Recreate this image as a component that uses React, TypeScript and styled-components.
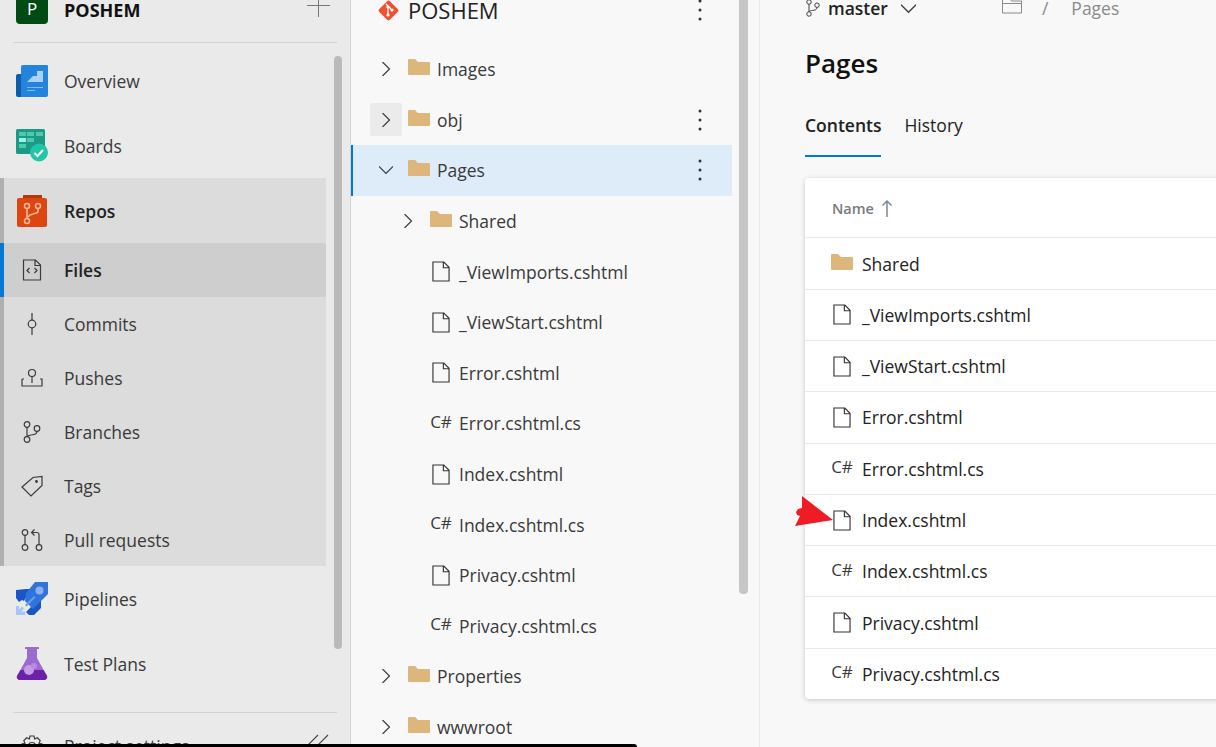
import React from "react";
import styled, { createGlobalStyle } from "styled-components";

const GlobalStyle = createGlobalStyle`
  html, body {
    margin: 0;
    padding: 0;
    height: 100%;
    overflow: hidden;
    background: #f8f8f8;
  }
  * {
    box-sizing: border-box;
  }
  body {
    font-family: "Open Sans", "Noto Sans", sans-serif;
    color: #2b2b2b;
  }
`;

const Page = styled.div`
  display: flex;
  position: relative;
  width: 1216px;
  height: 747px;
  overflow: hidden;
`;

const Sidebar = styled.aside`
  flex: 0 0 350px;
  height: 747px;
  background: #eaeaea;
  overflow: hidden;
`;

const ProjectHeader = styled.div`
  display: flex;
  align-items: center;
  height: 32px;
  margin-top: -8px;
  padding-left: 16px;
  margin-bottom: 18px;
`;

const ProjectAvatar = styled.div`
  display: flex;
  align-items: center;
  justify-content: center;
  width: 32px;
  height: 32px;
  border-radius: 4px;
  background: #004b14;
  color: #fff;
  font-size: 17px;
`;

const ProjectName = styled.div`
  margin: 4px 0 0 16px;
  font-size: 18px;
  font-weight: 700;
  color: #111;
`;

const AddButton = styled.div`
  margin-left: auto;
  margin-right: 20px;
  width: 23px;
  height: 23px;
  color: #777;
`;

const Divider = styled.div`
  height: 1px;
  margin: 0 13px;
  background: #d2d2d2;
`;

const SideBody = styled.div`
  display: flex;
  height: 669px;
`;

const Nav = styled.nav`
  flex: 0 0 326px;
  padding-top: 5px;
`;

const SideThumb = styled.div`
  flex: 0 0 8px;
  height: 593px;
  margin: 13px 0 0 8px;
  border-radius: 4px;
  background: #bababa;
`;

const NavGroup = styled.div`
  border-left: 4px solid #b0b0b0;
  background: #dcdcdc;
  height: 388px;
`;

const NavRow = styled.div<{ $tall?: boolean; $active?: boolean; $strong?: boolean; $inset?: boolean }>`
  display: flex;
  align-items: center;
  height: ${({ $tall }) => ($tall ? "65px" : "54px")};
  padding-left: ${({ $inset }) => ($inset ? "12px" : "16px")};
  font-size: 17.5px;
  font-weight: ${({ $strong }) => ($strong ? 600 : 400)};
  color: ${({ $strong }) => ($strong ? "#222" : "#3a3a3a")};
  background: ${({ $active }) => ($active ? "#cecece" : "transparent")};
  border-radius: ${({ $active }) => ($active ? "0 2px 2px 0" : "0")};
  box-shadow: ${({ $active }) => ($active ? "-4px 0 0 #0078d4" : "none")};
`;

const NavIcon = styled.div`
  display: flex;
  align-items: center;
  justify-content: center;
  flex: 0 0 32px;
  height: 33px;
  margin-right: 16px;
`;

const SettingsRow = styled.div`
  display: flex;
  align-items: center;
  height: 54px;
  margin-top: 6px;
  padding-left: 16px;
  font-size: 17.5px;
  color: #3a3a3a;
`;

const CollapseIcon = styled.div`
  margin-left: auto;
  margin-right: 21px;
  width: 24px;
  height: 24px;
`;

const TreePanel = styled.section`
  display: flex;
  flex: 0 0 410px;
  height: 747px;
  border-left: 1px solid #d4d4d4;
  border-right: 1px solid #e8e8e8;
  background: #f8f8f8;
`;

const TreeColumn = styled.div`
  flex: 0 0 381px;
`;

const TreeThumb = styled.div`
  flex: 0 0 9px;
  height: 594px;
  margin-left: 7px;
  border-radius: 0 0 4px 4px;
  background: #c6c6c6;
`;

const RepoHeader = styled.div`
  display: flex;
  align-items: center;
  height: 24px;
  margin-top: -2px;
  margin-bottom: 22px;
  padding-left: 26px;
  font-size: 22px;
  color: #222;
`;

const RepoName = styled.span`
  margin-left: 8px;
`;

const TreeRow = styled.div<{ $level: number; $selected?: boolean }>`
  display: flex;
  align-items: center;
  height: 50.6px;
  padding-left: ${({ $level }) => ($level === 2 ? 41 : 19)}px;
  font-size: 17.5px;
  color: #3a3a3a;
  background: ${({ $selected }) => ($selected ? "#deebf9" : "transparent")};
  box-shadow: ${({ $selected }) => ($selected ? "inset 2px 0 0 #0078d4" : "none")};
`;

const Toggle = styled.div<{ $hover?: boolean }>`
  display: flex;
  align-items: center;
  justify-content: center;
  flex: 0 0 32px;
  height: 33px;
  margin-right: 6px;
  border-radius: 2px;
  background: ${({ $hover }) => ($hover ? "#ebebeb" : "transparent")};
`;

const TreeLeadSpace = styled.div`
  flex: 0 0 38px;
`;

const TypeIcon = styled.div`
  display: flex;
  align-items: center;
  justify-content: center;
  flex: 0 0 22px;
  margin-right: 7px;
`;

const SharpLabel = styled.span`
  position: relative;
  top: -2px;
  font-size: 17px;
  line-height: 1;
  white-space: nowrap;
  color: #3a3a3a;
`;

const MoreButton = styled.div`
  display: flex;
  margin-left: auto;
  margin-right: 30px;
`;

const Main = styled.main`
  flex: 1;
  min-width: 0;
  padding-left: 45px;
  overflow: hidden;
`;

const BranchBar = styled.div`
  display: flex;
  align-items: center;
  height: 16px;
  font-size: 17.5px;
`;

const BranchName = styled.span`
  margin: 0 13px 0 7px;
  font-weight: 600;
  color: #222;
`;

const Crumbs = styled.div`
  display: flex;
  align-items: center;
  margin-left: 86px;
  color: #8a8a8a;
`;

const CrumbSlash = styled.span`
  margin: 0 23px 0 20px;
`;

const Title = styled.h1`
  margin: 27px 0 0;
  height: 40px;
  line-height: 40px;
  font-size: 26px;
  font-weight: 600;
  color: #111;
`;

const Tabs = styled.div`
  display: flex;
  gap: 23px;
  margin-top: 30px;
`;

const Tab = styled.div<{ $active?: boolean }>`
  height: 44px;
  line-height: 24px;
  font-size: 17.5px;
  font-weight: ${({ $active }) => ($active ? 600 : 400)};
  color: #222;
  border-bottom: 2px solid ${({ $active }) => ($active ? "#0078d4" : "transparent")};
`;

const Card = styled.div`
  width: 440px;
  margin-top: 21px;
  border-radius: 4px;
  background: #fff;
  box-shadow: 0 1px 5px rgba(0, 0, 0, 0.2);
`;

const CardHead = styled.div`
  display: flex;
  align-items: center;
  gap: 7px;
  height: 59.4px;
  padding: 1px 0 0 27px;
  font-size: 14.5px;
  font-weight: 600;
  color: #7a7a7a;
`;

const CardRow = styled.div`
  display: flex;
  align-items: center;
  height: 51.3px;
  padding-left: 26px;
  border-top: 1px solid #eaeaea;
  font-size: 17.5px;
  color: #222;
`;

const CardIcon = styled.div`
  position: relative;
  display: flex;
  align-items: center;
  justify-content: center;
  flex: 0 0 22px;
  margin-right: 9px;
`;

const RedArrow = styled.svg`
  position: absolute;
  left: -37px;
  top: -14px;
`;

const FolderSvg = styled.svg`
  margin-bottom: 4px;
`;

const ScreenEdge = styled.div`
  position: absolute;
  left: 0;
  bottom: 0;
  width: 637px;
  height: 3px;
  background: #000;
  border-top-right-radius: 4px;
`;

const Overview = () => (
  <svg width="32" height="32" viewBox="0 0 32 32">
    <path d="M0 11a2 2 0 0 1 2-2h5v23H2a2 2 0 0 1-2-2z" fill="#0f5ca8" />
    <path d="M5 32V2a2 2 0 0 1 2-2h24a1 1 0 0 1 1 1v29a2 2 0 0 1-2 2z" fill="#2484dc" />
    <path d="M11 17l6-6V11h4V6h6v11z" fill="#a9d3fb" />
    <path d="M11 22h16v1H11zM11 25h8v1h-8z" fill="#7dbcf3" />
  </svg>
);

const Boards = () => (
  <svg width="32" height="33" viewBox="0 0 32 33">
    <rect width="29" height="25" rx="1.5" fill="#1b9a85" />
    <path d="M3 3h7v4H3zM11 3h7v4h-7zM20 3h7v4h-7zM11 9h7v4h-7zM3 15h7v4H3z" fill="#4cc9ae" />
    <path d="M3 9h7v4H3z" fill="#9ff3e2" />
    <circle cx="23" cy="23.500" r="9" fill="#21c5a8" />
    <path d="M18.500 24l3 3 5.500-6" fill="none" stroke="#fff" strokeWidth="2" />
  </svg>
);

const Repos = () => (
  <svg width="32" height="33" viewBox="0 0 32 33">
    <path d="M7 1h19v5H7z" fill="#b23a0a" />
    <path d="M1 6a2 2 0 0 1 2-2h26a2 2 0 0 1 2 2v25a2 2 0 0 1-2 2H3a2 2 0 0 1-2-2z" fill="#de4610" />
    <g fill="none" stroke="#f7b9a0" strokeWidth="1.500">
      <circle cx="11" cy="12" r="2.500" />
      <circle cx="22" cy="12" r="2.500" />
      <circle cx="11" cy="27" r="2.500" />
      <path d="M11 14.500V24.500M22 14.500v2.500a2 2 0 0 1-2 2l-6 2-2 2" />
    </g>
  </svg>
);

const Pipelines = () => (
  <svg width="32" height="33" viewBox="0 0 32 33">
    <path d="M0 8l10-1 4 0-6 12-2-1-3 2-3-4zM25 18v8l-7 7h-5l-3-3 5-5z" fill="#1a56c4" />
    <path d="M19 0h13v12L17 27l-8-8 1-8z" fill="#2f74da" />
    <circle cx="23.500" cy="8.500" r="4" fill="#8fb0f0" />
    <path d="M9 23l9-9 1.500 1.500-9 9z" fill="#6a9cec" />
    <path d="M0 24h3v3.500l3-3 2 2-3 3H9v3.500H0z" fill="#a7c5fb" />
  </svg>
);

const TestPlans = () => (
  <svg width="32" height="33" viewBox="0 0 32 33">
    <path d="M9 0h14v2h-2v9l10 18a3 3 0 0 1-2.500 4H3.500A3 3 0 0 1 1 29l10-18V2H9z" fill="#9b6bcf" />
    <path d="M4.500 23h23l3.500 6a3 3 0 0 1-2.500 4H3.500A3 3 0 0 1 1 29z" fill="#6b21a8" />
    <circle cx="13" cy="23" r="5" fill="#c39be6" />
    <circle cx="18" cy="19" r="3" fill="#b98ae0" />
  </svg>
);

const stroke = { fill: "none", stroke: "#3a3a3a", strokeWidth: 1.2 };

const FilesGlyph = () => (
  <svg width="20" height="22" viewBox="0 0 20 22" {...stroke}>
    <path d="M1.500 1h12l5 5v15h-17zM13 1v5.500h5.500" />
    <path d="M7.500 9l-2.500 2.500 2.500 2.500M12.500 9l2.500 2.500-2.500 2.500" />
  </svg>
);

const CommitsGlyph = () => (
  <svg width="20" height="22" viewBox="0 0 20 22" {...stroke}>
    <circle cx="10" cy="11" r="3.800" />
    <path d="M10 0v7M10 15v7" />
  </svg>
);

const PushesGlyph = () => (
  <svg width="22" height="20" viewBox="0 0 22 20" {...stroke}>
    <circle cx="11" cy="5" r="3.500" />
    <path d="M11 8.500V15M1 11v7h20v-7h-2M1 11h2" />
  </svg>
);

const BranchGlyph = ({ size = 20 }: { size?: number }) => (
  <svg width={size} height={size + 2} viewBox="0 0 20 22" {...stroke}>
    <circle cx="5" cy="3.500" r="2.800" />
    <circle cx="5" cy="18.500" r="2.800" />
    <circle cx="15" cy="7.500" r="2.800" />
    <path d="M5 6.300v9.400M15 10.300c0 3-3 3.500-5.500 3.700C7 14.300 5.500 14.800 5 15.700" />
  </svg>
);

const TagsGlyph = () => (
  <svg width="22" height="22" viewBox="0 0 22 22" {...stroke}>
    <path d="M1 12L12 2.500l9-1v9L10 21z" />
    <circle cx="15.500" cy="6.500" r="0.800" fill="#3a3a3a" />
  </svg>
);

const PullGlyph = () => (
  <svg width="22" height="22" viewBox="0 0 22 22" {...stroke}>
    <circle cx="4" cy="3.500" r="2.800" />
    <circle cx="4" cy="18.500" r="2.800" />
    <circle cx="18" cy="18.500" r="2.800" />
    <path d="M4 6.300v9.400M18 15.700V5.500a2 2 0 0 0-2-2h-5M13.500 .5l-3 3 3 3" />
  </svg>
);

const GearGlyph = () => (
  <svg width="22" height="22" viewBox="0 0 22 22" {...stroke}>
    <circle cx="11" cy="11" r="3.500" />
    <path d="M9 1h4l.7 3 2.600-1.200 2.900 2.900L18 8.300l3 .7v4l-3 .7 1.200 2.600-2.900 2.900-2.600-1.200-.7 3H9l-.7-3-2.600 1.200-2.900-2.900L4 13.700 1 13V9l3-.7-1.200-2.600 2.900-2.900L8.300 4z" />
  </svg>
);

const PlusGlyph = () => (
  <svg width="23" height="23" viewBox="0 0 23 23" stroke="#777" strokeWidth="1">
    <path d="M0 8.500h23M11.500 -3v23" />
  </svg>
);

const CollapseGlyph = () => (
  <svg width="24" height="24" viewBox="0 0 24 24" fill="none" stroke="#444" strokeWidth="1.100">
    <path d="M0 14L13 1M10 14L23 1" />
  </svg>
);

const GitDiamond = () => (
  <svg width="23" height="23" viewBox="0 0 23 23">
    <rect x="4" y="4" width="15" height="15" rx="2" transform="rotate(45 11.500 11.500)" fill="#f05133" />
    <path d="M9 5l5 5M11 8v9" stroke="#fff" strokeWidth="1.300" />
    <circle cx="11" cy="8" r="1.600" fill="#fff" />
    <circle cx="11" cy="16" r="1.600" fill="#fff" />
    <circle cx="15" cy="11" r="1.600" fill="#fff" />
  </svg>
);

const Chevron = ({ open, size = 14 }: { open?: boolean; size?: number }) => (
  <svg width={size} height={size} viewBox="0 0 14 14" fill="none" stroke="#3d3d3d" strokeWidth="1.200">
    {open ? <path d="M0 3.500l7 7 7-7" /> : <path d="M3.500 0l7 7-7 7" />}
  </svg>
);

const Folder = () => (
  <FolderSvg width="22" height="16" viewBox="0 0 22 16">
    <path d="M0 1a1 1 0 0 1 1-1h6l3 3h11a1 1 0 0 1 1 1v11a1 1 0 0 1-1 1H1a1 1 0 0 1-1-1z" fill="#dcb67a" />
  </FolderSvg>
);

const FileGlyph = () => (
  <svg width="18" height="21" viewBox="0 0 19 22" fill="none" stroke="#333" strokeWidth="1.200">
    <path d="M1 1h11.500L18 6.500V21H1zM12 1v6h6" />
  </svg>
);

const Dots = () => (
  <svg width="4" height="22" viewBox="0 0 4 22" fill="#333">
    <circle cx="2" cy="2" r="1.500" />
    <circle cx="2" cy="11" r="1.500" />
    <circle cx="2" cy="20" r="1.500" />
  </svg>
);

const CrumbFolder = () => (
  <svg width="20" height="16" viewBox="0 0 20 16" fill="none" stroke="#8a8a8a" strokeWidth="1">
    <path d="M.5 -2h7l2 3h10v12H.5zM.5 3.500h19" />
  </svg>
);

const SortArrow = () => (
  <svg width="12" height="17" viewBox="0 0 12 17" fill="none" stroke="#7a8a9a" strokeWidth="1.500">
    <path d="M6 17V1M1.500 5.500L6 1l4.500 4.500" />
  </svg>
);

const MarkerArrow = () => (
  <RedArrow width="40" height="32" viewBox="0 0 40 32">
    <path d="M8 0l31 24-38 6 5-10-3-1-1-3 2-3 4-1z" fill="#ee1c25" />
  </RedArrow>
);

type NavItem = { label: string; glyph: React.ReactNode; strong?: boolean; active?: boolean };

const repoItems: NavItem[] = [
  { label: "Files", glyph: <FilesGlyph />, strong: true, active: true },
  { label: "Commits", glyph: <CommitsGlyph /> },
  { label: "Pushes", glyph: <PushesGlyph /> },
  { label: "Branches", glyph: <BranchGlyph /> },
  { label: "Tags", glyph: <TagsGlyph /> },
  { label: "Pull requests", glyph: <PullGlyph /> },
];

type TreeItem = {
  name: string;
  kind: "folder" | "file" | "cs";
  level: 1 | 2;
  toggle?: "open" | "closed" | "hover";
  selected?: boolean;
  more?: boolean;
};

const treeItems: TreeItem[] = [
  { name: "Images", kind: "folder", level: 1, toggle: "closed" },
  { name: "obj", kind: "folder", level: 1, toggle: "hover", more: true },
  { name: "Pages", kind: "folder", level: 1, toggle: "open", selected: true, more: true },
  { name: "Shared", kind: "folder", level: 2, toggle: "closed" },
  { name: "_ViewImports.cshtml", kind: "file", level: 2 },
  { name: "_ViewStart.cshtml", kind: "file", level: 2 },
  { name: "Error.cshtml", kind: "file", level: 2 },
  { name: "Error.cshtml.cs", kind: "cs", level: 2 },
  { name: "Index.cshtml", kind: "file", level: 2 },
  { name: "Index.cshtml.cs", kind: "cs", level: 2 },
  { name: "Privacy.cshtml", kind: "file", level: 2 },
  { name: "Privacy.cshtml.cs", kind: "cs", level: 2 },
  { name: "Properties", kind: "folder", level: 1, toggle: "closed" },
  { name: "wwwroot", kind: "folder", level: 1, toggle: "closed" },
];

const cardItems: { name: string; kind: TreeItem["kind"]; marked?: boolean }[] = [
  { name: "Shared", kind: "folder" },
  { name: "_ViewImports.cshtml", kind: "file" },
  { name: "_ViewStart.cshtml", kind: "file" },
  { name: "Error.cshtml", kind: "file" },
  { name: "Error.cshtml.cs", kind: "cs" },
  { name: "Index.cshtml", kind: "file", marked: true },
  { name: "Index.cshtml.cs", kind: "cs" },
  { name: "Privacy.cshtml", kind: "file" },
  { name: "Privacy.cshtml.cs", kind: "cs" },
];

const KindIcon = ({ kind }: { kind: TreeItem["kind"] }) => {
  if (kind === "folder") return <Folder />;
  if (kind === "file") return <FileGlyph />;
  return <SharpLabel>C#</SharpLabel>;
};

const App: React.FC = () => {
  return (
    <Page>
      <GlobalStyle />
      <Sidebar>
        <ProjectHeader>
          <ProjectAvatar>P</ProjectAvatar>
          <ProjectName>POSHEM</ProjectName>
          <AddButton>
            <PlusGlyph />
          </AddButton>
        </ProjectHeader>
        <Divider />
        <SideBody>
          <Nav>
            <NavRow $tall>
              <NavIcon>
                <Overview />
              </NavIcon>
              Overview
            </NavRow>
            <NavRow $tall>
              <NavIcon>
                <Boards />
              </NavIcon>
              Boards
            </NavRow>
            <NavGroup>
              <NavRow $tall $inset $strong>
                <NavIcon>
                  <Repos />
                </NavIcon>
                Repos
              </NavRow>
              {repoItems.map((item) => (
                <NavRow key={item.label} $inset $strong={item.strong} $active={item.active}>
                  <NavIcon>{item.glyph}</NavIcon>
                  {item.label}
                </NavRow>
              ))}
            </NavGroup>
            <NavRow $tall>
              <NavIcon>
                <Pipelines />
              </NavIcon>
              Pipelines
            </NavRow>
            <NavRow $tall>
              <NavIcon>
                <TestPlans />
              </NavIcon>
              Test Plans
            </NavRow>
          </Nav>
          <SideThumb />
        </SideBody>
        <Divider />
        <SettingsRow>
          <NavIcon>
            <GearGlyph />
          </NavIcon>
          Project settings
          <CollapseIcon>
            <CollapseGlyph />
          </CollapseIcon>
        </SettingsRow>
      </Sidebar>

      <TreePanel>
        <TreeColumn>
          <RepoHeader>
            <GitDiamond />
            <RepoName>POSHEM</RepoName>
            <MoreButton>
              <Dots />
            </MoreButton>
          </RepoHeader>
          {treeItems.map((item) => (
            <TreeRow key={item.name} $level={item.level} $selected={item.selected}>
              {item.toggle ? (
                <Toggle $hover={item.toggle === "hover"}>
                  <Chevron open={item.toggle === "open"} />
                </Toggle>
              ) : (
                <TreeLeadSpace />
              )}
              <TypeIcon>
                <KindIcon kind={item.kind} />
              </TypeIcon>
              {item.name}
              {item.more && (
                <MoreButton>
                  <Dots />
                </MoreButton>
              )}
            </TreeRow>
          ))}
        </TreeColumn>
        <TreeThumb />
      </TreePanel>

      <Main>
        <BranchBar>
          <BranchGlyph size={16} />
          <BranchName>master</BranchName>
          <Chevron open size={15} />
          <Crumbs>
            <CrumbFolder />
            <CrumbSlash>/</CrumbSlash>
            Pages
          </Crumbs>
        </BranchBar>
        <Title>Pages</Title>
        <Tabs>
          <Tab $active>Contents</Tab>
          <Tab>History</Tab>
        </Tabs>
        <Card>
          <CardHead>
            Name
            <SortArrow />
          </CardHead>
          {cardItems.map((item) => (
            <CardRow key={item.name}>
              <CardIcon>
                <KindIcon kind={item.kind} />
                {item.marked && <MarkerArrow />}
              </CardIcon>
              {item.name}
            </CardRow>
          ))}
        </Card>
      </Main>
      <ScreenEdge />
    </Page>
  );
};

export default App;
